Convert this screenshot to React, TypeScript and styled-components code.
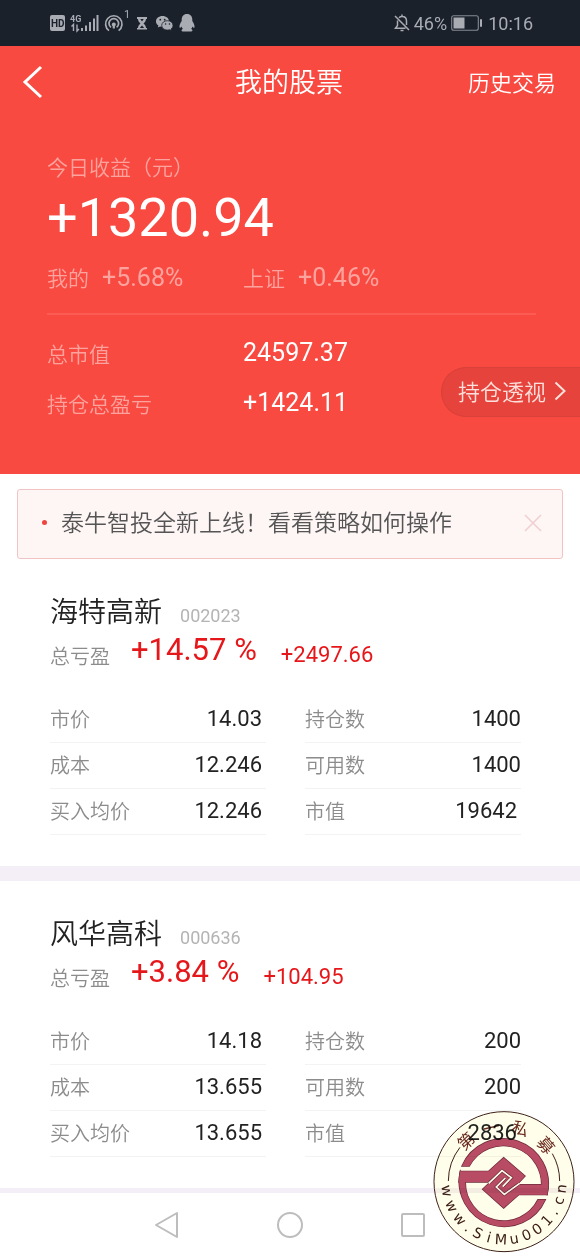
import React from "react";
import styled, { createGlobalStyle } from "styled-components";

const latin = `Roboto, "Noto Sans CJK SC", sans-serif`;
const han = `"Noto Sans CJK SC", Roboto, sans-serif`;

const GlobalStyle = createGlobalStyle`
  * { box-sizing: border-box; }
  body { margin: 0; background: #fff; font-family: ${latin}; }
  button { border: 0; padding: 0; background: none; color: inherit; font: inherit; cursor: pointer; }
  svg { display: block; flex: none; }
  dl, dt, dd, h1, h2, p { margin: 0; font-weight: inherit; }
`;

const Screen = styled.div`
  position: relative;
  display: flex;
  flex-direction: column;
  min-height: 100vh;
`;

/* ---------- status bar ---------- */

const StatusBar = styled.div`
  display: flex;
  align-items: center;
  justify-content: space-between;
  height: 46px;
  padding: 0 47px 0 50px;
  background: #1a212b;
  color: #a9acb3;
  font-size: 18px;
`;

const StatusGroup = styled.div<{ $gap: number }>`
  display: flex;
  align-items: center;
  gap: ${(p) => p.$gap}px;
`;

/* ---------- red summary area ---------- */

const Hero = styled.header`
  background: #f94a42;
  color: #fff;
  padding-bottom: 46px;
`;

const TitleBar = styled.div`
  display: grid;
  grid-template-columns: 1fr auto 1fr;
  align-items: center;
  height: 72px;
  padding: 0 24px 0 22px;
  font-family: ${han};
  font-weight: 350;
`;

const BackButton = styled.button`
  justify-self: start;
`;

const Title = styled.h1`
  padding-bottom: 2px;
  font-size: 27px;
  line-height: 40px;
`;

const HistoryButton = styled.button`
  justify-self: end;
  padding-bottom: 3px;
  font-size: 22px;
  line-height: 32px;
`;

const Earnings = styled.section`
  margin: 0 44px 0 47px;
  padding: 33px 0 21px;
  border-bottom: 2px solid #fb5b53;
`;

const SoftLabel = styled.span`
  display: block;
  color: #fda39d;
  font-family: ${han};
  font-weight: 350;
  font-size: 21px;
  line-height: 30px;
`;

const BigFigure = styled.p`
  margin: 7px 0 14px;
  font-size: 54px;
  line-height: 60px;
`;

const Compare = styled.div`
  display: grid;
  grid-template-columns: 196px 1fr;
`;

const CompareItem = styled.div`
  display: flex;
  align-items: baseline;
  gap: 13px;
  height: 30px;
  color: #fda39d;
  font-size: 25px;
  line-height: 30px;
`;

const Holdings = styled.section`
  display: flex;
  justify-content: space-between;
  align-items: flex-start;
  padding: 13px 0 0 47px;
`;

const HoldingList = styled.dl`
  flex: 1;
`;

const HoldingRow = styled.div`
  display: grid;
  grid-template-columns: 196px 1fr;
  height: 50px;
  align-items: center;

  dd { font-size: 25px; line-height: 30px; }
`;

const InsightButton = styled.button`
  display: flex;
  align-items: center;
  gap: 8px;
  height: 50px;
  margin-top: 39px;
  padding: 0 14px 2px 16px;
  border: 1px solid #d8403a;
  border-right: 0;
  border-radius: 25px 0 0 25px;
  background: #e5433b;
  color: #fde0dc;
  font-family: ${han};
  font-weight: 350;
  font-size: 22px;
  line-height: 30px;

  span { padding-bottom: 2px; }
`;

/* ---------- notice ---------- */

const Notice = styled.aside`
  display: flex;
  align-items: center;
  margin: 15px 17px 0;
  height: 70px;
  padding: 0 20px 3px 24px;
  border: 1px solid #f2c3c5;
  border-radius: 3px;
  background: #fef5f5;
`;

const Dot = styled.span`
  width: 5px;
  height: 5px;
  border-radius: 50%;
  background: #f0443f;
`;

const NoticeText = styled.p`
  flex: 1;
  margin-left: 14px;
  padding-bottom: 3px;
  color: #555;
  font-family: ${han};
  font-weight: 350;
  font-size: 23px;
  line-height: 34px;
`;

/* ---------- stock cards ---------- */

const Card = styled.article`
  padding: 33px 59px 30px 50px;
`;

const CardHead = styled.div`
  display: flex;
  align-items: baseline;
  gap: 18px;
  height: 36px;
`;

const StockName = styled.h2`
  color: #222;
  font-family: ${han};
  font-weight: 350;
  font-size: 28px;
  line-height: 36px;
`;

const StockCode = styled.span`
  color: #b4b4b4;
  font-size: 18px;
`;

const ProfitRow = styled.div`
  display: flex;
  align-items: flex-end;
  height: 42px;
  color: #e6171a;
`;

const GreyLabel = styled.span`
  color: #8c8c8c;
  font-family: ${han};
  font-weight: 350;
  font-size: 20px;
  line-height: 28px;
`;

const Percent = styled.span`
  margin: 0 24px 0 21px;
  font-size: 31px;
  line-height: 40px;
`;

const Amount = styled.span`
  font-size: 22px;
  line-height: 30px;
`;

const Facts = styled.dl`
  display: grid;
  grid-template-columns: 1fr 1fr;
  column-gap: 39px;
  margin-top: 27px;
`;

const Fact = styled.div<{ $inset: boolean }>`
  display: flex;
  align-items: center;
  justify-content: space-between;
  height: 46px;
  padding: 0 ${(p) => (p.$inset ? 4 : 0)}px 1px 0;
  border-bottom: 1px solid #f3f3f3;

  dd { color: #222; font-size: 22px; line-height: 30px; }
`;

const Divider = styled.div<{ $size: number }>`
  height: ${(p) => p.$size}px;
  margin-top: 1px;
  background: #f4eef6;
`;

/* ---------- system navigation ---------- */

const SystemNav = styled.nav`
  display: flex;
  justify-content: center;
  align-items: center;
  gap: 97px;
  height: 64px;
  color: #bdbdbd;
`;

const Stamp = styled.svg`
  position: absolute;
  right: 5px;
  bottom: 4px;
  mix-blend-mode: multiply;
  pointer-events: none;
`;

/* ---------- drawings ---------- */

const SignalIcons = () => (
  <svg width="145" height="30" viewBox="0 0 145 30" fill="currentColor">
    <rect x="0" y="7" width="15" height="16" rx="2" />
    <text x="1" y="19" fontSize="10" fontWeight="700" fill="#1a212b">HD</text>
    <text x="20" y="14" fontSize="9" fontWeight="700">4G</text>
    <path d="M23.500 23v-6.500l-2 2M27 16.500v6.500l2-2" stroke="currentColor" strokeWidth="1.400" fill="none" />
    <path d="M31 20h2v3h-2zM35 17.500h2v5.500h-2zM39 14h2v9h-2zM43 10.500h2v12.500h-2zM46.500 7h2v16h-2z" />
    <g fill="none" stroke="currentColor" strokeWidth="1.700">
      <path d="M59 22.600a8.200 8.200 0 1 1 9.600 0" />
      <path d="M61 19.400a4.800 4.800 0 1 1 5.600 0" />
    </g>
    <circle cx="63.800" cy="16.400" r="2" />
    <path d="M62.700 17h2.200v3.500h-2.200z" />
    <text x="74" y="10" fontSize="11">1</text>
    <path d="M87 9h10v2h-1c0 2-1 3-2.500 4.500c1.500 1.500 2.500 2.500 2.500 4.500h1v1.500h-10V20h1c0-2 1-3 2.500-4.500c-1.500-1.500-2.500-2.500-2.500-4.500h-1z" />
    <path d="M90.300 11h3.400L92 13.400zM89.800 20l2.200-2.400l2.200 2.400z" fill="#1a212b" />
    <path d="M112.500 8c-3.700 0-6.500 2.400-6.500 5.400c0 1.700.9 3.200 2.400 4.200l-.6 2l2.300-1.200c.8.200 1.500.3 2.400.3c3.700 0 6.500-2.300 6.500-5.300S116.200 8 112.500 8z" />
    <path d="M117.500 12.700c-3.400 0-5.800 2.100-5.800 4.700s2.400 4.700 5.800 4.700c.7 0 1.300-.1 2-.3l1.900 1l-.5-1.700c1.300-.9 2.100-2.200 2.100-3.700c0-2.600-2.400-4.700-5.500-4.700z" stroke="#1a212b" strokeWidth=".8" />
    <g fill="#1a212b">
      <circle cx="110.300" cy="11.700" r=".9" /><circle cx="114.700" cy="11.700" r=".9" />
      <circle cx="115.600" cy="16" r=".8" /><circle cx="119.500" cy="16" r=".8" />
    </g>
    <path d="M137 6c-3.600 0-5.300 2.500-5.300 5.500v1.500c-1.400 2-2.500 4.300-2.200 6.200c.3 1 1.200.4 2-.8c.2 1 .7 1.800 1.400 2.500c-2 .9-1.700 2.600.6 2.600h7c2.300 0 2.600-1.700.6-2.600c.7-.7 1.200-1.500 1.400-2.500c.8 1.200 1.700 1.800 2 .8c.3-1.900-.8-4.200-2.200-6.200v-1.500c0-3-1.700-5.500-5.300-5.500z" />
  </svg>
);

const MutedBell = () => (
  <svg width="16" height="18" viewBox="0 0 16 18" fill="none" stroke="currentColor" strokeWidth="1.500">
    <path d="M1 2l14 14M3.500 6.500v5L1.500 14.200h10M5 3.700c.8-.8 1.800-1.200 3-1.200c2.700 0 4.500 1.900 4.500 4.500v4M8 .5v2M6.500 16.500h3" />
  </svg>
);

const Battery = () => (
  <svg width="32" height="16" viewBox="0 0 32 16">
    <rect x=".7" y=".7" width="26.600" height="14.600" rx="2" fill="none" stroke="currentColor" strokeWidth="1.100" opacity=".75" />
    <rect x="2.500" y="2.500" width="11" height="11" fill="currentColor" />
    <rect x="29" y="4" width="2" height="8" rx="1" fill="currentColor" />
  </svg>
);

/* Places every character of a label on a circle, one bearing (degrees) per character. */
const CENTER = { x: 251, y: 274 };

interface RingLabelProps {
  text: string;
  bearings: number[];
  radius: number;
  size: number;
  widths: number[];
  inward?: boolean;
  fill: string;
  family: string;
}

const RingLabel = ({ text, bearings, radius, size, widths, inward, fill, family }: RingLabelProps) => {
  const spots = bearings.map((deg, i) => {
    const a = (deg * Math.PI) / 180;
    const turn = inward ? 90 - deg : deg;
    const t = (turn * Math.PI) / 180;
    const cx = inward ? CENTER.x - radius * Math.cos(a) : CENTER.x + radius * Math.sin(a);
    const cy = inward ? CENTER.y + radius * Math.sin(a) : CENTER.y - radius * Math.cos(a);
    const half = (widths[i] * size) / 2;
    return { x: cx - half * Math.cos(t), y: cy - half * Math.sin(t), turn };
  });
  return (
    <text
      x={spots.map((s) => s.x.toFixed(1)).join(" ")}
      y={spots.map((s) => s.y.toFixed(1)).join(" ")}
      rotate={spots.map((s) => s.turn.toFixed(1)).join(" ")}
      fontSize={size}
      fill={fill}
      fontFamily={family}
    >
      {text}
    </text>
  );
};

const Emblem = () => (
  <>
    <path d="M125 227A135 135 0 0 1 380 313L362 300A115 115 0 0 0 147 227Z" />
    <path d="M120 243A135 135 0 0 0 375 328H353A115 115 0 0 1 135 275Z" />
    <path d="M120 243H205L250 202L314 257L290 283H384L380 313H295L250 353L187 297L210 275H116Z" />
  </>
);

const SiteStamp = () => (
  <Stamp width="142" height="142" viewBox="38 62 426 426">
    <circle cx="251" cy="274" r="210" fill="#fffeea" stroke="#3d2018" strokeWidth="3" />
    <path d="M84 272A167 167 0 0 1 119 171M418 272A167 167 0 0 0 396 190" fill="none" stroke="#3d2018" strokeWidth="3" />
    <g fill="#6e2a3c" stroke="#6e2a3c" strokeWidth="4">
      <Emblem />
    </g>
    <g fill="#b84c64">
      <Emblem />
    </g>
    <path d="M207 277L245 241L273 262L247 289M294 282L252 312L228 290L255 263" fill="none" stroke="#6e2a3c" strokeWidth="9" />
    <path d="M205 279L245 241L273 262L247 289M297 280L252 312L228 290L255 263" fill="none" stroke="#fffeea" strokeWidth="5" />
    <RingLabel
      text="第一私募"
      bearings={[-43, -13, 17, 49]}
      radius={148}
      size={50}
      widths={[1, 1, 1, 1]}
      fill="#6b2a20"
      family='"Noto Sans CJK SC", sans-serif'
    />
    <RingLabel
      text="www.SiMu001.cn"
      bearings={[9, 25, 40, 52, 63, 75, 87, 100, 113, 125, 138, 149, 161, 173]}
      radius={188}
      size={43}
      widths={[0.82, 0.82, 0.82, 0.32, 0.64, 0.28, 0.86, 0.63, 0.64, 0.64, 0.64, 0.32, 0.55, 0.63]}
      inward
      fill="#3d2018"
      family='"DejaVu Sans", sans-serif'
    />
  </Stamp>
);

/* ---------- data ---------- */

interface FactData {
  label: string;
  value: string;
  inset?: boolean;
}

interface Stock {
  name: string;
  code: string;
  percent: string;
  amount: string;
  facts: FactData[];
}

const stocks: Stock[] = [
  {
    name: "海特高新",
    code: "002023",
    percent: "+14.57 %",
    amount: "+2497.66",
    facts: [
      { label: "市价", value: "14.03", inset: true },
      { label: "持仓数", value: "1400" },
      { label: "成本", value: "12.246", inset: true },
      { label: "可用数", value: "1400" },
      { label: "买入均价", value: "12.246", inset: true },
      { label: "市值", value: "19642", inset: true },
    ],
  },
  {
    name: "风华高科",
    code: "000636",
    percent: "+3.84 %",
    amount: "+104.95",
    facts: [
      { label: "市价", value: "14.18", inset: true },
      { label: "持仓数", value: "200" },
      { label: "成本", value: "13.655", inset: true },
      { label: "可用数", value: "200" },
      { label: "买入均价", value: "13.655", inset: true },
      { label: "市值", value: "2836", inset: true },
    ],
  },
];

const StockCard = ({ stock }: { stock: Stock }) => (
  <Card>
    <CardHead>
      <StockName>{stock.name}</StockName>
      <StockCode>{stock.code}</StockCode>
    </CardHead>
    <ProfitRow>
      <GreyLabel>总亏盈</GreyLabel>
      <Percent>{stock.percent}</Percent>
      <Amount>{stock.amount}</Amount>
    </ProfitRow>
    <Facts>
      {stock.facts.map((f) => (
        <Fact key={f.label} $inset={!!f.inset}>
          <GreyLabel as="dt">{f.label}</GreyLabel>
          <dd>{f.value}</dd>
        </Fact>
      ))}
    </Facts>
  </Card>
);

export default function App() {
  return (
    <Screen>
      <GlobalStyle />
      <StatusBar>
        <SignalIcons />
        <StatusGroup $gap={4}>
          <MutedBell />
          <span>46%</span>
          <StatusGroup $gap={5}>
            <Battery />
            <span>10:16</span>
          </StatusGroup>
        </StatusGroup>
      </StatusBar>

      <Hero>
        <TitleBar>
          <BackButton aria-label="返回">
            <svg width="22" height="34" viewBox="0 0 22 34" fill="none" stroke="currentColor" strokeWidth="3">
              <path d="M19 2L3 17L19 32" />
            </svg>
          </BackButton>
          <Title>我的股票</Title>
          <HistoryButton>历史交易</HistoryButton>
        </TitleBar>

        <Earnings>
          <SoftLabel>今日收益（元）</SoftLabel>
          <BigFigure>+1320.94</BigFigure>
          <Compare>
            <CompareItem>
              <SoftLabel>我的</SoftLabel>
              <span>+5.68%</span>
            </CompareItem>
            <CompareItem>
              <SoftLabel>上证</SoftLabel>
              <span>+0.46%</span>
            </CompareItem>
          </Compare>
        </Earnings>

        <Holdings>
          <HoldingList>
            <HoldingRow>
              <SoftLabel as="dt">总市值</SoftLabel>
              <dd>24597.37</dd>
            </HoldingRow>
            <HoldingRow>
              <SoftLabel as="dt">持仓总盈亏</SoftLabel>
              <dd>+1424.11</dd>
            </HoldingRow>
          </HoldingList>
          <InsightButton>
            <span>持仓透视</span>
            <svg width="12" height="20" viewBox="0 0 12 20" fill="none" stroke="currentColor" strokeWidth="2">
              <path d="M1.500 1.500L10.500 10L1.500 18.500" />
            </svg>
          </InsightButton>
        </Holdings>
      </Hero>

      <main>
        <Notice>
          <Dot />
          <NoticeText>泰牛智投全新上线！看看策略如何操作</NoticeText>
          <button aria-label="关闭">
            <svg width="18" height="18" viewBox="0 0 18 18" fill="none" stroke="#efcfcf" strokeWidth="1.600">
              <path d="M1 1L17 17M17 1L1 17" />
            </svg>
          </button>
        </Notice>
        <StockCard stock={stocks[0]} />
        <Divider $size={15} />
        <StockCard stock={stocks[1]} />
        <Divider $size={5} />
      </main>

      <SystemNav>
        <button aria-label="后退">
          <svg width="26" height="28" viewBox="0 0 26 28" fill="none" stroke="currentColor" strokeWidth="2" strokeLinejoin="round">
            <path d="M23 2V26L2 14Z" />
          </svg>
        </button>
        <button aria-label="主页">
          <svg width="26" height="28" viewBox="0 0 26 28" fill="none" stroke="currentColor" strokeWidth="2">
            <circle cx="13" cy="14" r="12" />
          </svg>
        </button>
        <button aria-label="最近任务">
          <svg width="26" height="28" viewBox="0 0 26 28" fill="none" stroke="currentColor" strokeWidth="2">
            <rect x="2" y="3" width="22" height="22" rx="1" />
          </svg>
        </button>
      </SystemNav>

      <SiteStamp />
    </Screen>
  );
}
